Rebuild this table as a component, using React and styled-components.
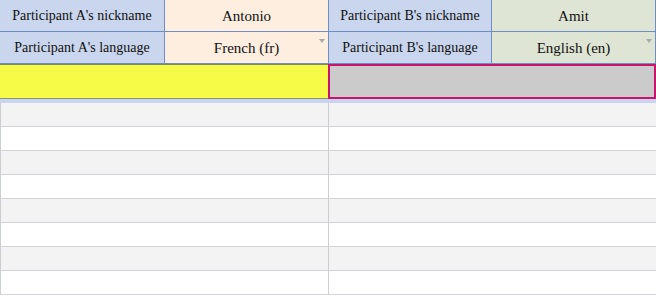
import React from "react";
import styled, { createGlobalStyle } from "styled-components";

const Global = createGlobalStyle`
  body {
    margin: 0;
    background: #ffffff;
  }
`;

const Sheet = () => {
  const stripes = [0, 1, 2, 3, 4, 5, 6, 7];

  return (
    <Page>
      <Global />
      <Row>
        <Label width={165}>Participant A's nickname</Label>
        <Value width={164} tone="peach">Antonio</Value>
        <Label width={163}>Participant B's nickname</Label>
        <Value width={164} tone="sage">Amit</Value>
      </Row>
      <Row>
        <Label width={165}>Participant A's language</Label>
        <Value width={164} tone="peach">
          French (fr)
          <Arrow />
        </Value>
        <Label width={163}>Participant B's language</Label>
        <Value width={164} tone="sage">
          English (en)
          <Arrow />
        </Value>
      </Row>
      <InputRow>
        <YellowCell />
        <SelectedCell />
      </InputRow>
      <Strip />
      {stripes.map((i) => (
        <StripeRow key={i} odd={i % 2 === 1}>
          <StripeCell width={328} />
          <StripeCell width={328} />
        </StripeRow>
      ))}
    </Page>
  );
};

const Page = styled.div`
  width: 656px;
  height: 296px;
  overflow: hidden;
  font-family: "Liberation Serif", "Times New Roman", serif;
  color: #111111;
`;

const Row = styled.div`
  display: flex;
  height: 32px;
`;

const Cell = styled.div`
  box-sizing: border-box;
  position: relative;
  width: ${(p) => p.width}px;
  display: flex;
  align-items: center;
  justify-content: center;
  border-right: 1px solid #6f8fc2;
  border-bottom: 1px solid #6f8fc2;
  white-space: nowrap;
`;

const Label = styled(Cell)`
  background: #c9d6ed;
  font-size: 14px;
`;

const Value = styled(Cell)`
  background: ${(p) => (p.tone === "peach" ? "#fdeedf" : "#dfe5d5")};
  font-size: 15px;
  padding-top: 1px;
`;

const Arrow = styled.span`
  position: absolute;
  right: 3px;
  top: 7px;
  width: 0;
  height: 0;
  border-left: 3px solid transparent;
  border-right: 3px solid transparent;
  border-top: 4px solid #a9a9a9;
`;

const InputRow = styled.div`
  display: flex;
  height: 35px;
`;

const YellowCell = styled.div`
  box-sizing: border-box;
  width: 328px;
  background: #f5fb47;
  border-top: 1px solid #7c8d5d;
  border-bottom: 1px solid #8b957a;
`;

const SelectedCell = styled.div`
  box-sizing: border-box;
  width: 328px;
  background: #cbcbcb;
  border: 2px solid #c8146c;
`;

const Strip = styled.div`
  height: 4px;
  background: #c9d5f0;
`;

const StripeRow = styled.div`
  box-sizing: border-box;
  display: flex;
  height: 24px;
  background: ${(p) => (p.odd ? "#ffffff" : "#f3f3f3")};
  border-bottom: 1px solid #d2d2d8;
`;

const StripeCell = styled.div`
  box-sizing: border-box;
  width: ${(p) => p.width}px;
  border-left: 1px solid #cdcdd4;
`;

export default Sheet;
